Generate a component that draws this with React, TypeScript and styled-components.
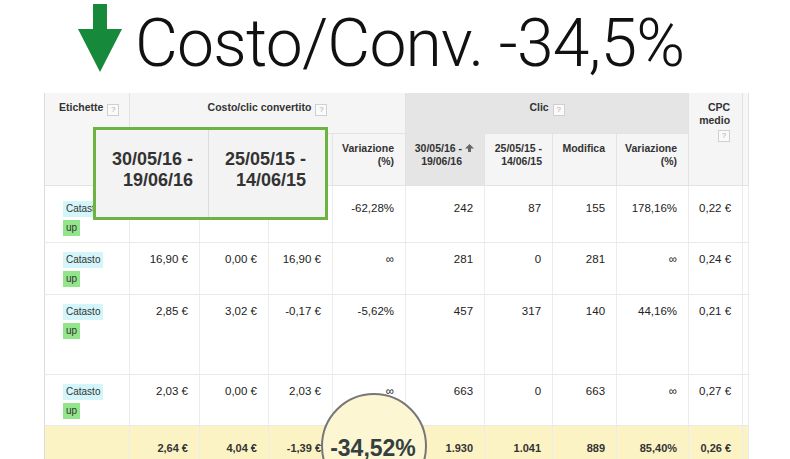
import React from "react";
import styled, { createGlobalStyle } from "styled-components";

const Global = createGlobalStyle`
  html, body { margin: 0; padding: 0; background: #fff; overflow: hidden; }
  body { font-family: "Liberation Sans", Arial, sans-serif; color: #222; }
`;

const Page = styled.div`
  width: 790px;
  height: 459px;
  overflow: hidden;
  background: #fff;
`;

const TitleBar = styled.div`
  display: flex;
  align-items: flex-start;
  height: 93px;
  padding-left: 78px;
`;

const Arrow = styled.svg`
  margin-top: 4px;
  flex: none;
`;

const TitleText = styled.div`
  margin-left: 13px;
  margin-top: 11px;
  font-family: Roboto, "Liberation Sans", sans-serif;
  font-weight: 300;
  font-size: 66px;
  line-height: 66px;
  letter-spacing: -0.8px;
  color: #111;
  white-space: nowrap;
`;

const TableWrap = styled.div`
  position: relative;
  margin-left: 44px;
  width: 704px;
`;

const Table = styled.table`
  border-collapse: collapse;
  table-layout: fixed;
  width: 704px;
  font-family: "Liberation Sans", Arial, sans-serif;
`;

const Head = styled.th<{ $bg?: string; $align?: string; $pt?: number; $pr?: number; $pl?: number }>`
  background: ${(p) => p.$bg || "#f5f5f5"};
  text-align: ${(p) => p.$align || "right"};
  vertical-align: top;
  padding: ${(p) => p.$pt ?? 8}px ${(p) => p.$pr ?? 11}px 0 ${(p) => p.$pl ?? 4}px;
  font-size: 10.5px;
  line-height: 13px;
  font-weight: bold;
  color: #333;
  border: 1px solid #e3e3e3;
  border-top: none;
  white-space: nowrap;
  overflow: hidden;
`;

const Help = styled.span`
  display: inline-block;
  width: 10px;
  height: 10px;
  margin-left: 4px;
  border: 1px solid #d0d0d0;
  background: #fafafa;
  color: #aaa;
  font-size: 8px;
  line-height: 10px;
  text-align: center;
  font-weight: normal;
  vertical-align: -1px;
`;

const SortHead = styled.div`
  display: flex;
  justify-content: flex-end;
  align-items: flex-start;
  gap: 3px;
`;

const SortArrow = styled.svg`
  margin-top: 2px;
  flex: none;
`;

const Row = styled.tr<{ $h: number; $bg?: string }>`
  height: ${(p) => p.$h}px;
  background: ${(p) => p.$bg || "#fff"};
`;

const Cell = styled.td<{ $pt?: number; $bold?: boolean; $align?: string }>`
  vertical-align: top;
  text-align: ${(p) => p.$align || "right"};
  padding: ${(p) => p.$pt ?? 9}px 11px 0 4px;
  font-size: ${(p) => (p.$bold ? "11px" : "11.5px")};
  font-weight: ${(p) => (p.$bold ? "bold" : "normal")};
  line-height: 14px;
  color: ${(p) => (p.$bold ? "#333" : "#222")};
  border-left: 1px solid #ececec;
  border-right: 1px solid #ececec;
  border-bottom: 1px solid #e9e9e9;
  white-space: nowrap;
  overflow: hidden;
`;

const LabelCell = styled(Cell)`
  text-align: left;
  padding-left: 18px;
  border-left: 1px solid #dcdcdc;
`;

const Labels = styled.div`
  display: flex;
  flex-direction: column;
  align-items: flex-start;
  gap: 3px;
`;

const Badge = styled.span<{ $bg: string }>`
  display: inline-block;
  background: ${(p) => p.$bg};
  font-size: 10px;
  line-height: 16px;
  padding: 0 3px;
  color: #333;
`;

const Highlight = styled.div`
  position: absolute;
  left: 49px;
  top: 34px;
  width: 235px;
  height: 93px;
  box-sizing: border-box;
  border: 3px solid #6cb341;
  display: grid;
  grid-template-columns: 113px 1fr;
  background: #f3f3f3;
`;

const HighlightCell = styled.div<{ $pr: number; $divider?: boolean }>`
  padding: 19px ${(p) => p.$pr}px 0 0;
  text-align: right;
  font-size: 18px;
  line-height: 21px;
  font-weight: bold;
  color: #333;
  border-right: ${(p) => (p.$divider ? "1px solid #dcdcdc" : "none")};
  white-space: nowrap;
`;

const Circle = styled.div`
  position: absolute;
  left: 277px;
  top: 300px;
  width: 106px;
  height: 106px;
  box-sizing: border-box;
  border-radius: 50%;
  border: 2px solid #777;
  background: #fcf6d3;
  display: flex;
  align-items: flex-start;
  justify-content: center;
  padding-top: 41px;
`;

const CircleText = styled.span`
  font-size: 23px;
  line-height: 24px;
  font-weight: bold;
  color: #344040;
  margin-left: -2px;
`;

const Catasto = () => (
  <Labels>
    <Badge $bg="#d4f6fb">Catasto</Badge>
    <Badge $bg="#93e58c">up</Badge>
  </Labels>
);

type RowData = { h: number; pt: number; values: string[] };

const rows: RowData[] = [
  { h: 57, pt: 15, values: ["", "", "", "-62,28%", "242", "87", "155", "178,16%", "0,22 €"] },
  { h: 52, pt: 9, values: ["16,90 €", "0,00 €", "16,90 €", "∞", "281", "0", "281", "∞", "0,24 €"] },
  { h: 80, pt: 9, values: ["2,85 €", "3,02 €", "-0,17 €", "-5,62%", "457", "317", "140", "44,16%", "0,21 €"] },
  { h: 51, pt: 9, values: ["2,03 €", "0,00 €", "2,03 €", "∞", "663", "0", "663", "∞", "0,27 €"] },
];

const totals = ["2,64 €", "4,04 €", "-1,39 €", "", "1.930", "1.041", "889", "85,40%", "0,26 €"];

const widths = [85, 70, 69, 64, 73, 79, 68, 64, 72, 54, 6];

export default function App() {
  return (
    <Page>
      <Global />
      <TitleBar>
        <Arrow width="44" height="69" viewBox="0 0 44 69">
          <rect x="15" y="0" width="14" height="26" fill="#17893a" />
          <polygon points="0,25 44,25 22,68" fill="#17893a" />
        </Arrow>
        <TitleText>Costo/Conv. -34,5%</TitleText>
      </TitleBar>
      <TableWrap>
        <Table>
          <colgroup>
            {widths.map((w, i) => (
              <col key={i} style={{ width: w }} />
            ))}
          </colgroup>
          <thead>
            <tr style={{ height: 40 }}>
              <Head rowSpan={2} $align="left" $pl={14} $bg="#f6f6f6" style={{ borderLeft: "1px solid #dcdcdc" }}>
                Etichette<Help>?</Help>
              </Head>
              <Head colSpan={4} $align="center" $pr={0} $pl={0}>
                Costo/clic convertito<Help>?</Help>
              </Head>
              <Head colSpan={4} $align="center" $pr={0} $pl={0} $bg="#e5e5e5">
                Clic<Help>?</Help>
              </Head>
              <Head rowSpan={2} $pr={12} $pt={8}>
                CPC
                <br />
                medio
                <br />
                <Help style={{ marginLeft: 0 }}>?</Help>
              </Head>
              <Head rowSpan={2} $bg="#f7f7f7" $pr={0} $pl={0} />
            </tr>
            <tr style={{ height: 52 }}>
              <Head />
              <Head />
              <Head />
              <Head>
                Variazione
                <br />
                (%)
              </Head>
              <Head $bg="#e5e5e5" $pr={10}>
                <SortHead>
                  <span>
                    30/05/16 -<br />19/06/16
                  </span>
                  <SortArrow width="9" height="8" viewBox="0 0 9 8">
                    <polygon points="4.5,0 9,4.5 6,4.5 6,8 3,8 3,4.5 0,4.5" fill="#666" />
                  </SortArrow>
                </SortHead>
              </Head>
              <Head $pr={10}>
                25/05/15 -<br />14/06/15
              </Head>
              <Head>Modifica</Head>
              <Head>
                Variazione
                <br />
                (%)
              </Head>
            </tr>
          </thead>
          <tbody>
            {rows.map((r, i) => (
              <Row key={i} $h={r.h}>
                <LabelCell $pt={r.pt}>
                  <Catasto />
                </LabelCell>
                {r.values.map((v, j) => (
                  <Cell key={j} $pt={r.pt}>
                    {v}
                  </Cell>
                ))}
                <Cell />
              </Row>
            ))}
            <Row $h={34} $bg="#fcf3c5">
              <LabelCell $bold $pt={15} />
              {totals.map((v, j) => (
                <Cell key={j} $bold $pt={15}>
                  {v}
                </Cell>
              ))}
              <Cell />
            </Row>
          </tbody>
        </Table>
        <Highlight>
          <HighlightCell $pr={15} $divider>
            30/05/16 -<br />19/06/16
          </HighlightCell>
          <HighlightCell $pr={19}>
            25/05/15 -<br />14/06/15
          </HighlightCell>
        </Highlight>
        <Circle>
          <CircleText>-34,52%</CircleText>
        </Circle>
      </TableWrap>
    </Page>
  );
}
